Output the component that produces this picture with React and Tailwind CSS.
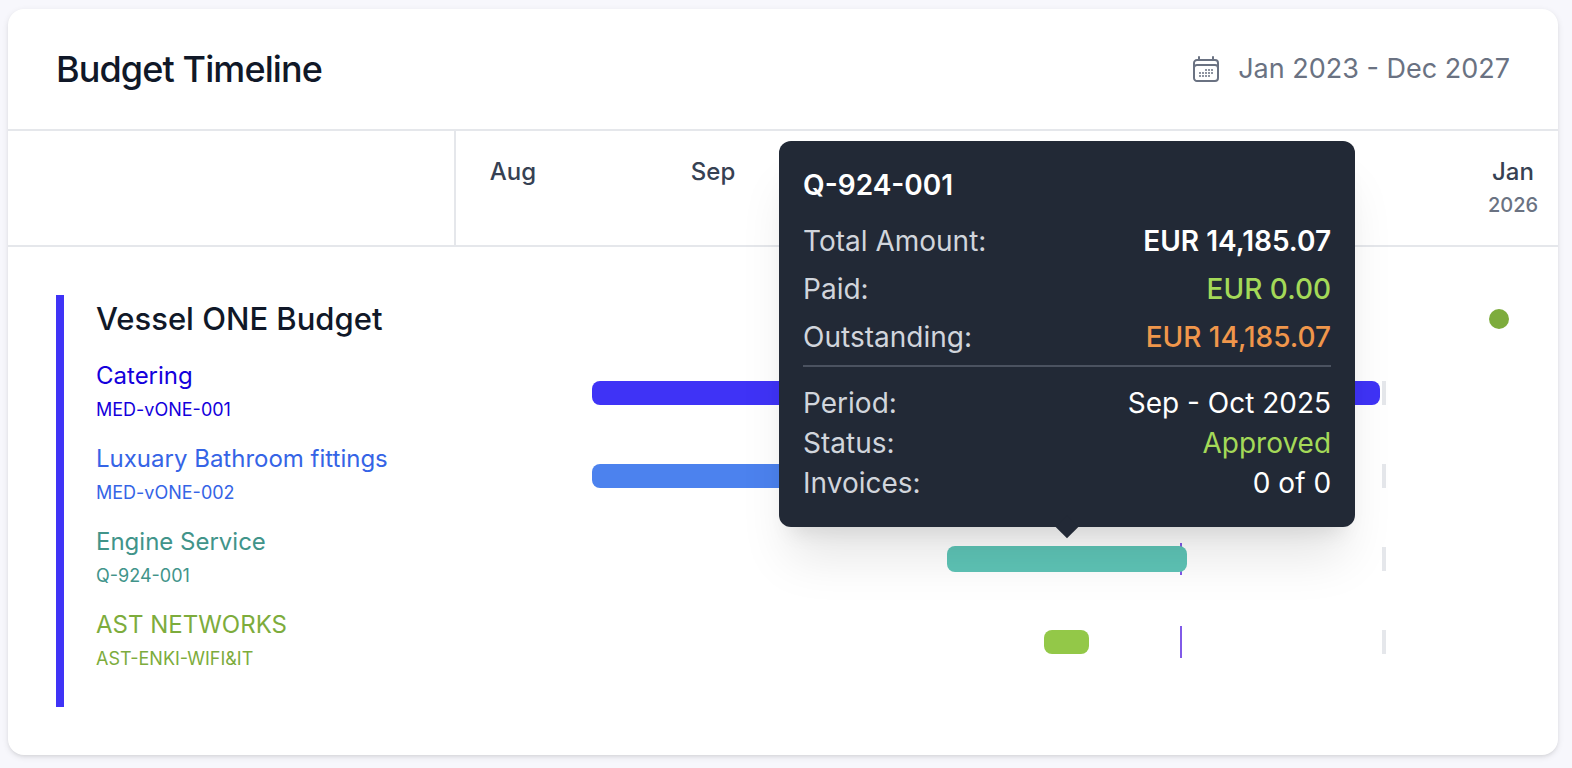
import React from "react";
import { clsx } from "clsx";
import { HiOutlineCalendarDays } from "react-icons/hi2";

// months under the open tooltip keep their slot but are not shown
const months = [
  { name: "Aug" },
  { name: "Sep" },
  { name: "Oct", covered: true },
  { name: "Nov", covered: true },
  { name: "Dec", covered: true },
  { name: "Jan", year: "2026" },
];

// start, span and markers are percentages of the visible range
const TODAY = 65.7;
const PERIOD_END = 84.03;

const quotes = [
  {
    code: "MED-vONE-001",
    name: "Catering",
    text: "text-[#1400dc]",
    bar: "bg-[#3f33f6]",
    start: 12.34,
    span: 71.5,
  },
  {
    code: "MED-vONE-002",
    name: "Luxuary Bathroom fittings",
    text: "text-[#3564e6]",
    bar: "bg-[#4c82ee]",
    start: 12.34,
    span: 40,
  },
  {
    code: "Q-924-001",
    name: "Engine Service",
    text: "text-[#41948a]",
    bar: "bg-[#5ec4b6]",
    start: 44.56,
    span: 21.78,
    details: {
      total: "EUR 14,185.07",
      paid: "EUR 0.00",
      outstanding: "EUR 14,185.07",
      period: "Sep - Oct 2025",
      status: "Approved",
      invoices: "0 of 0",
    },
  },
  {
    code: "AST-ENKI-WIFI&IT",
    name: "AST NETWORKS",
    text: "text-[#7dac3c]",
    bar: "bg-[#93c848]",
    start: 53.36,
    span: 4.08,
  },
];

function TooltipRow({ label, value, className }) {
  return (
    <div className="flex justify-between">
      <dt className="text-gray-300">{label}:</dt>
      <dd className={className}>{value}</dd>
    </div>
  );
}

function QuoteTooltip({ code, details }) {
  return (
    <div
      role="tooltip"
      className="absolute bottom-full left-1/2 z-20 mb-[19px] w-[576px] -translate-x-1/2 rounded-xl bg-[#222936] p-6 text-left text-[28px] leading-10 text-white shadow-[0_40px_50px_-10px_rgba(0,0,0,0.1),0_16px_20px_-12px_rgba(0,0,0,0.1)]"
    >
      <p className="mb-4 font-semibold">{code}</p>
      <dl className="flex flex-col gap-2 border-b-2 border-[#4b5260] pb-2">
        <TooltipRow label="Total Amount" value={details.total} className="font-semibold" />
        <TooltipRow label="Paid" value={details.paid} className="font-medium text-[#a4d958]" />
        <TooltipRow
          label="Outstanding"
          value={details.outstanding}
          className="font-medium text-[#f0964b]"
        />
      </dl>
      <dl className="pt-4">
        <TooltipRow label="Period" value={details.period} />
        <TooltipRow label="Status" value={details.status} className="text-[#a4d958]" />
        <TooltipRow label="Invoices" value={details.invoices} />
      </dl>
      <span className="absolute -bottom-2 left-1/2 size-4 -translate-x-1/2 rotate-45 bg-[#222936]" />
    </div>
  );
}

function QuoteRow({ quote }) {
  const active = !!quote.details;

  return (
    <div className="flex">
      <div className={clsx("w-[392px] shrink-0 pl-8", quote.text)}>
        <p className="text-2xl leading-9">{quote.name}</p>
        <p className="text-lg leading-8">{quote.code}</p>
      </div>
      <div className="relative flex-1">
        <span
          className="absolute top-[23px] h-6 w-1 bg-gray-200"
          style={{ left: `${PERIOD_END}%` }}
        />
        <span
          className="absolute top-[19px] h-8 w-0.5 bg-[#815ae8]"
          style={{ left: `${TODAY}%` }}
        />
        <div
          className={clsx(
            "absolute rounded-lg",
            active ? "top-[22px] h-[26px]" : "top-[23px] h-6",
            quote.bar
          )}
          style={{ left: `${quote.start}%`, width: `${quote.span}%` }}
        >
          {active && <QuoteTooltip code={quote.code} details={quote.details} />}
        </div>
      </div>
    </div>
  );
}

function App() {
  return (
    <div className="min-h-screen bg-[#f7f7fc] pt-[9px] pr-[14px] pb-[13px] pl-2 font-[Inter,sans-serif]">
      <section className="rounded-2xl bg-white shadow-[0_2px_6px_rgba(0,0,0,0.1),0_2px_4px_-2px_rgba(0,0,0,0.1)]">
        <header className="flex items-center justify-between border-b-2 border-gray-200 px-12 py-8">
          <h2 className="text-4xl leading-14 font-medium tracking-tight text-gray-900">
            Budget Timeline
          </h2>
          <div className="flex items-center gap-4 text-[27px] leading-10 text-gray-500">
            <HiOutlineCalendarDays className="size-8" />
            <span>Jan 2023 - Dec 2027</span>
          </div>
        </header>

        <div className="flex border-b-2 border-gray-200">
          <div className="w-[448px] shrink-0 border-r-2 border-gray-200" />
          <div className="flex flex-1 justify-between pt-6 pr-[13px] pb-6 pl-[25px] text-center">
            {months.map((month) => (
              <div key={month.name} className="w-16">
                {!month.covered && (
                  <p className="text-2xl leading-[34px] font-medium text-gray-700">{month.name}</p>
                )}
                <p className="h-8 text-xl leading-8 font-medium text-gray-500">{month.year}</p>
              </div>
            ))}
          </div>
        </div>

        <div className="py-12 pl-12">
          <div className="flex flex-col gap-[15px] border-l-8 border-[#3f33f6] pb-8">
            <div className="flex">
              <h3 className="w-[392px] shrink-0 pl-8 text-[31px] leading-12 font-medium text-gray-900">
                Vessel ONE Budget
              </h3>
              <div className="relative flex-1">
                <span
                  className="absolute top-[14px] size-5 rounded-full bg-[#7dac3c]"
                  style={{ left: "93.74%" }}
                />
              </div>
            </div>
            {quotes.map((quote) => (
              <QuoteRow key={quote.code} quote={quote} />
            ))}
          </div>
        </div>
      </section>
    </div>
  );
}

export default App;
